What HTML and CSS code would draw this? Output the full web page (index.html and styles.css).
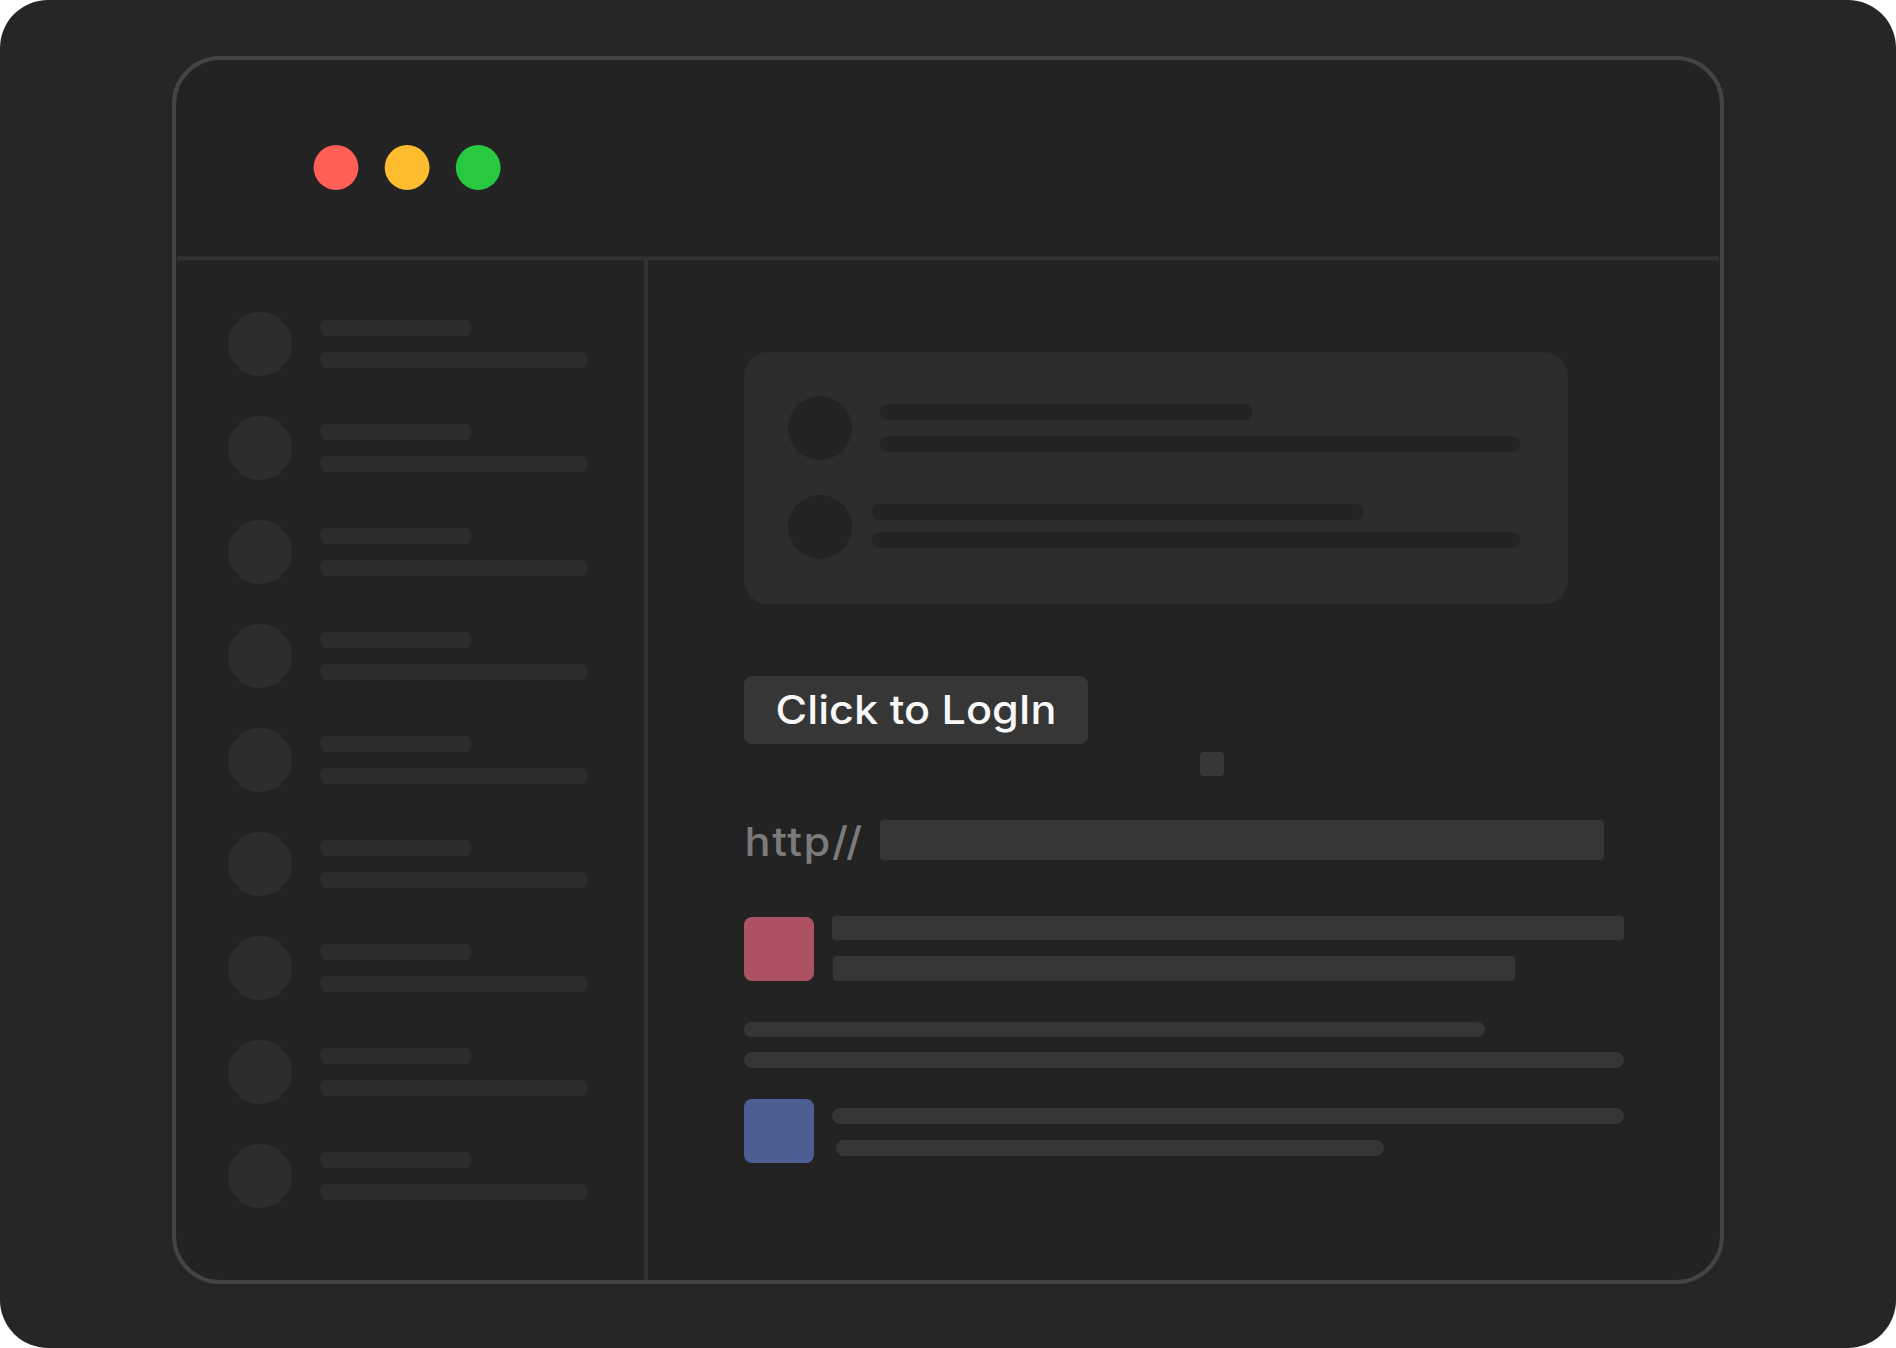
FILE: index.html
```html
<!DOCTYPE html>
<html lang="en">
<head>
<meta charset="utf-8">
<title>Click to LogIn</title>
<link rel="stylesheet" href="styles.css">
</head>
<body>
<div class="stage">
  <div class="window">
    <header class="titlebar">
      <svg class="dots" width="188" height="47" viewBox="0 0 188 47" aria-hidden="true">
        <circle class="dot-close" cx="23" cy="23.5" r="22.4"/>
        <circle class="dot-min" cx="94.1" cy="23.5" r="22.4"/>
        <circle class="dot-max" cx="165.2" cy="23.5" r="22.4"/>
      </svg>
    </header>
    <div class="body">
      <aside class="sidebar">
        <div class="item"><span class="avatar"></span><div class="lines"><i></i><i></i></div></div>
        <div class="item"><span class="avatar"></span><div class="lines"><i></i><i></i></div></div>
        <div class="item"><span class="avatar"></span><div class="lines"><i></i><i></i></div></div>
        <div class="item"><span class="avatar"></span><div class="lines"><i></i><i></i></div></div>
        <div class="item"><span class="avatar"></span><div class="lines"><i></i><i></i></div></div>
        <div class="item"><span class="avatar"></span><div class="lines"><i></i><i></i></div></div>
        <div class="item"><span class="avatar"></span><div class="lines"><i></i><i></i></div></div>
        <div class="item"><span class="avatar"></span><div class="lines"><i></i><i></i></div></div>
        <div class="item"><span class="avatar"></span><div class="lines"><i></i><i></i></div></div>
      </aside>
      <main class="content">
        <section class="card">
          <div class="ghost"><span class="ghost-tile"></span><div class="ghost-lines"><i></i><i></i></div></div>
          <div class="card-row card-row-first"><span class="avatar"></span><div class="lines"><i></i><i></i></div></div>
          <div class="card-row card-row-second"><span class="avatar"></span><div class="lines"><i></i><i></i></div></div>
        </section>
        <button class="login" type="button"><span class="login-text">Click to LogIn</span></button>
        <span class="chip"></span>
        <div class="url"><span class="url-label">http<b class="slashes">//</b></span><span class="url-field"></span></div>
        <div class="entry entry-red"><span class="tile"></span><div class="lines"><i></i><i></i></div></div>
        <div class="paragraph"><i></i><i></i></div>
        <div class="entry entry-blue"><span class="tile"></span><div class="lines"><i></i><i></i></div></div>
      </main>
    </div>
  </div>
</div>
</body>
</html>
```

FILE: styles.css
```css
* { box-sizing: border-box; }

body {
  margin: 0;
  background: #fff;
  font-family: Inter, "Liberation Sans", sans-serif;
}

i, span { display: block; flex: none; }

.stage {
  width: 1896px;
  height: 1348px;
  padding: 56px 172px 64px;
  border-radius: 48px;
  background: #262626;
}

.window {
  display: flex;
  flex-direction: column;
  height: 1228px;
  border: 4px solid #444448;
  border-radius: 48px;
  background: #232323;
}

/* title bar */
.titlebar {
  flex: none;
  display: flex;
  flex-direction: column;
  justify-content: space-between;
  height: 201px;
  padding: 84px 1px 0;
}
.titlebar::after {
  content: "";
  height: 5px;
  background: linear-gradient(#2b2b2c 1px, #333335 1px, #333335 4px, #2b2b2c 4px);
}
.dots { display: block; margin-left: 136px; }
.dot-close { fill: #ff5f57; }
.dot-min { fill: #febc2e; }
.dot-max { fill: #28c840; }

.body { display: flex; flex: 1; margin-top: -1px; }

/* sidebar */
.sidebar {
  display: flex;
  flex-direction: column;
  gap: 40px;
  width: 472px;
  padding: 52px 0 0 52px;
  border-right: 4px solid #333337;
}
.avatar { width: 64px; height: 64px; border-radius: 50%; }
.item { display: flex; gap: 28px; }
.item .avatar { width: 64.4px; margin-right: -0.4px; background: #2d2d2d; }
.item .lines { display: grid; gap: 16px; padding-top: 8px; align-content: start; }
.item i { width: 268px; height: 16px; border-radius: 8px; background: #2d2d2d; }
.item i:first-child { width: 152px; }

/* content */
.content { display: flex; flex-direction: column; flex: 1; padding: 92px 0 0 96px; }

.card {
  position: relative;
  width: 824px;
  height: 252px;
  padding: 44px 0 0 44px;
  border-radius: 24px;
  background: #2d2d2d;
}
.card-row { position: relative; display: flex; }
.card-row .avatar, .card-row i { background: #232325; }
.card-row i { height: 16px; border-radius: 8px; }
.card-row .lines { display: grid; align-content: start; }
.card-row-first { gap: 28px; height: 98.6px; }
.card-row-first .lines { gap: 16px; padding-top: 8px; }
.card-row-first i { width: 640px; }
.card-row-first i:first-child { width: 372px; }
.card-row-second { gap: 20px; }
.card-row-second .lines { gap: 12px; padding-top: 9.4px; }
.card-row-second i { width: 648px; }
.card-row-second i:first-child { width: 492px; }

/* faint layer behind the card rows */
.ghost { position: absolute; top: 100px; left: 228px; display: flex; gap: 21px; }
.ghost-tile { width: 68px; height: 52px; background: #2c2c2c; }
.ghost-lines { display: grid; gap: 14px; padding-top: 5px; align-content: start; }
.ghost-lines i { width: 474px; height: 14px; border-radius: 7px; background: #2c2c2c; }
.ghost-lines i:first-child { width: 354px; height: 16px; }

.login {
  display: flex;
  justify-content: center;
  width: 344px;
  height: 68px;
  margin: 72px 0 0;
  padding: 0;
  border: 0;
  border-radius: 8px;
  background: #363636;
  color: #f8f8f8;
  font: 500 40px/68px Inter, "Liberation Sans", sans-serif;
}
.login-text { white-space: nowrap; transform: scaleX(1.08); }

.chip { width: 24px; height: 24px; margin: 8px 0 0 456px; border-radius: 4px; background: #363636; }

.url { display: flex; height: 40px; margin-top: 44px; }
.url-label {
  width: 136px;
  padding-left: 0.5px;
  color: #7b7b7b;
  font-size: 40px;
  font-weight: 500;
  line-height: 43px;
  letter-spacing: 1.4px;
  white-space: nowrap;
  transform: scaleX(1.085);
  transform-origin: left;
}
.slashes { font-weight: 500; letter-spacing: -1.8px; }
.url-field { width: 724px; height: 40px; border-radius: 4px; background: #363636; }

.entry { display: flex; gap: 18px; }
.tile { width: 70px; height: 64.3px; border-radius: 8px; }
.entry .lines { display: grid; align-content: start; }
.entry i { background: #363636; }
.entry-red { margin-top: 56px; }
.entry-red .tile { margin-top: 0.5px; background: #ad5263; }
.entry-red .lines { gap: 16px; }
.entry-red i { width: 792px; height: 24px; border-radius: 4px; }
.entry-red i:last-child { width: 681.5px; height: 25px; margin-left: 1.4px; }

.paragraph { display: grid; gap: 15px; margin-top: 41px; }
.paragraph i { width: 880px; height: 16px; border-radius: 8px; background: #363636; }
.paragraph i:first-child { width: 740.6px; height: 15px; margin-left: 0.4px; }

.entry-blue { margin-top: 31px; }
.entry-blue .tile { background: #4c5e92; }
.entry-blue .lines { gap: 16px; padding-top: 9px; }
.entry-blue i { width: 792px; height: 16px; border-radius: 8px; }
.entry-blue i:last-child { width: 548px; margin-left: 4px; }
```
